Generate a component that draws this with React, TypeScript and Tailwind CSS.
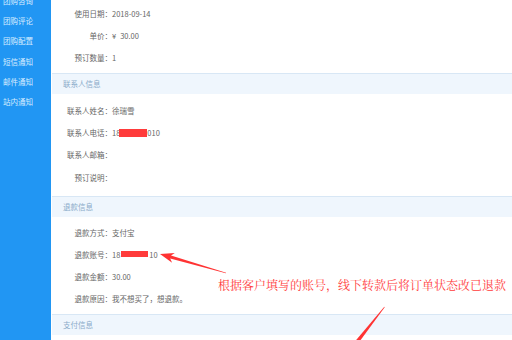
import React from 'react';

const menu = ['团购咨询', '团购评论', '团购配置', '短信通知', '邮件通知', '站内通知'];

const Redact = ({ className }: { className: string }) => (
  <span className={`inline-block bg-[#ff3b3b] ${className}`} />
);

const Row = ({ label, children, h = 'h-[22px]' }: { label: string; children?: React.ReactNode; h?: string }) => (
  <div className={`flex items-center ${h}`}>
    <div className="w-[60px] shrink-0 text-right whitespace-nowrap text-[#666]">{label}</div>
    <div className="flex items-center text-[#666]">{children}</div>
  </div>
);

const SectionHead = ({ title }: { title: string }) => (
  <div className="h-[21px] border-t border-[#d8e7f5] bg-[#eff6fd] pl-[11px] flex items-center text-[#8aabc9]">
    {title}
  </div>
);

export default function App() {
  return (
    <div
      className="relative w-[512px] h-[340px] overflow-hidden flex bg-white text-[7.5px] leading-none"
      style={{ fontFamily: '"Noto Sans CJK SC", "Noto Sans", sans-serif' }}
    >
      <aside className="w-[51px] shrink-0 bg-[#2196f3] text-[#d9edff]">
        <div className="-mt-[9.7px]">
          {menu.map((m) => (
            <div key={m} className="h-[20.3px] flex items-center pl-[3px]">
              {m}
            </div>
          ))}
        </div>
      </aside>

      <main className="flex-1 pl-px">
        <div className="pt-[3px] pb-[4px]">
          <Row label="使用日期：">2018-09-14</Row>
          <Row label="单价：">
            ¥<span className="ml-[4px]">30.00</span>
          </Row>
          <Row label="预订数量：">1</Row>
        </div>

        <SectionHead title="联系人信息" />
        <div className="pt-[6px] pb-[6px]">
          <Row label="联系人姓名：">徐瑞雪</Row>
          <Row label="联系人电话：">
            18
            <Redact className="w-[28px] h-[8px] -ml-[1px]" />
            010
          </Row>
          <Row label="联系人邮箱：" />
          <Row label="预订说明：" h="h-[24px]" />
        </div>

        <SectionHead title="退款信息" />
        <div className="pt-[5px] pb-[4px]">
          <Row label="退款方式：">支付宝</Row>
          <Row label="退款账号：">
            18
            <span className="relative inline-block w-[28px] h-[8px] ml-[1px]">
              <Redact className="absolute left-0 top-0 w-[27px] h-[6px]" />
            </span>
            10
          </Row>
          <Row label="退款金额：">30.00</Row>
          <Row label="退款原因：">我不想买了，想退款。</Row>
        </div>

        <SectionHead title="支付信息" />
      </main>

      <div
        className="absolute left-[218px] top-[279px] text-[12px] leading-none text-[#ff3b3b] whitespace-nowrap"
        style={{ fontFamily: '"Noto Serif CJK SC", "Noto Sans CJK SC", serif' }}
      >
        根据客户填写的账号，线下转款后将订单状态改已退款
      </div>

      <svg className="absolute left-0 top-0 pointer-events-none" width="512" height="340" viewBox="0 0 512 340">
        <polygon
          fill="#ff3333"
          points="160,254 174.8,253.1 171,255.6 226.1,272.7 225.9,273.3 170.2,258.4 172.1,262.7"
        />
        <polygon fill="#ff3333" points="384.7,307.2 352.3,351.4 348.9,348.6 384.3,306.8" />
      </svg>
    </div>
  );
}
